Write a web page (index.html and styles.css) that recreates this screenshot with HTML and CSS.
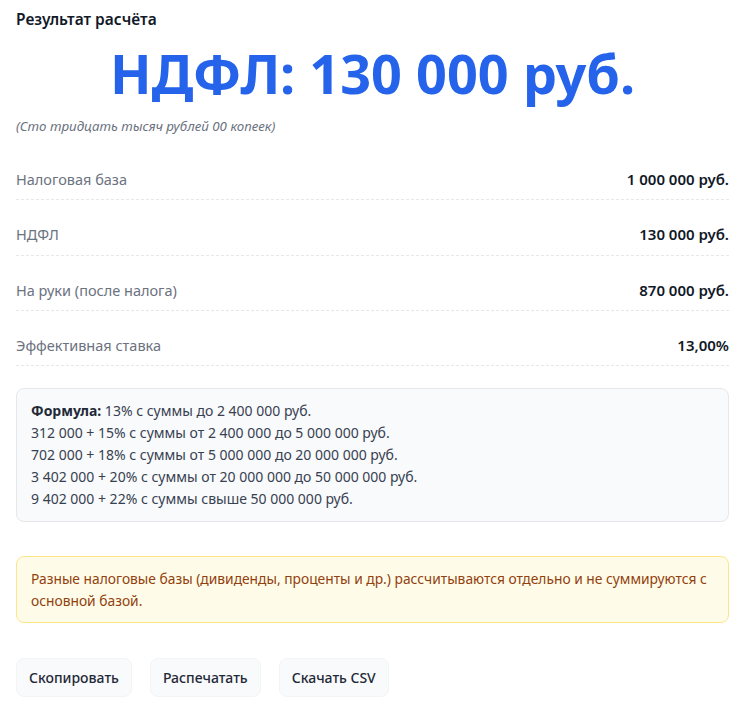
FILE: index.html
```html
<!DOCTYPE html>
<html lang="ru">
<head>
  <meta charset="utf-8">
  <title>Результат расчёта НДФЛ</title>
  <link rel="stylesheet" href="styles.css">
</head>
<body>
  <!-- Result -->
  <section class="result">
    <h3 class="result-title">Результат расчёта</h3>
    <div class="result-total">НДФЛ: 130 000 руб.</div>
    <div class="result-words">(Сто тридцать тысяч рублей 00 копеек)</div>

    <div class="result-rows">
      <div class="row">
        <span class="row-label">Налоговая база</span>
        <span class="row-value">1 000 000 руб.</span>
      </div>
      <div class="row">
        <span class="row-label">НДФЛ</span>
        <span class="row-value">130 000 руб.</span>
      </div>
      <div class="row">
        <span class="row-label">На руки (после налога)</span>
        <span class="row-value">870 000 руб.</span>
      </div>
      <div class="row">
        <span class="row-label">Эффективная ставка</span>
        <span class="row-value">13,00%</span>
      </div>
    </div>

    <div class="formula">
      <strong>Формула:</strong> 13% с суммы до 2 400 000 руб.<br>
      312 000 + 15% с суммы от 2 400 000 до 5 000 000 руб.<br>
      702 000 + 18% с суммы от 5 000 000 до 20 000 000 руб.<br>
      3 402 000 + 20% с суммы от 20 000 000 до 50 000 000 руб.<br>
      9 402 000 + 22% с суммы свыше 50 000 000 руб.
    </div>

    <div class="notice">
      Разные налоговые базы (дивиденды, проценты и др.) рассчитываются отдельно и не суммируются с основной базой.
    </div>

    <div class="actions">
      <button class="btn">Скопировать</button>
      <button class="btn">Распечатать</button>
      <button class="btn">Скачать CSV</button>
    </div>
  </section>
</body>
</html>
```

FILE: styles.css
```css
/* General */
body {
    margin: 0;
    padding: 0 16px;
    font-family: "Noto Sans", "Open Sans", sans-serif;
    color: #1f2937;
    background: #fff;
}

.result-title {
    margin: 8px 0 0;
    font-size: 15.5px;
    font-weight: 600;
    color: #111827;
    line-height: 22px;
}

.result-total {
    margin-top: 11px;
    text-align: center;
    font-size: 54px;
    font-weight: 700;
    line-height: 64px;
    color: #2563eb;
}

.result-words {
    margin-top: 12px;
    font-size: 13.3px;
    font-style: italic;
    color: #6b7280;
    line-height: 18px;
}

/* Rows */
.result-rows {
    margin-top: 10px;
}

.row {
    display: flex;
    justify-content: space-between;
    align-items: center;
    padding: 24px 0 10px;
    border-bottom: 1px dashed #e5e7eb;
    font-size: 14.5px;
    line-height: 20.3px;
}

.row-label {
    color: #6b7280;
}

.row-value {
    color: #111827;
    font-size: 15px;
    font-weight: 600;
}

/* Formula */
.formula {
    margin-top: 22px;
    padding: 11px 14px;
    background: #f9fafb;
    border: 1px solid #e5e7eb;
    border-radius: 8px;
    font-size: 14px;
    line-height: 22px;
    color: #374151;
}

.formula strong {
    color: #1f2937;
}

/* Notice */
.notice {
    margin-top: 34px;
    padding: 10.5px 14px;
    background: #fefce8;
    border: 1px solid #fde68a;
    border-radius: 8px;
    font-size: 13.8px;
    line-height: 22px;
    color: #92400e;
}

/* Buttons */
.actions {
    display: flex;
    gap: 18px;
    margin-top: 35px;
}

.btn {
    height: 39px;
    padding: 0 12px;
    border: 1px solid #f3f4f6;
    border-radius: 8px;
    background: #f9fafb;
    font-family: inherit;
    font-size: 14px;
    font-weight: 500;
    color: #1f2937;
    cursor: pointer;
}
```
